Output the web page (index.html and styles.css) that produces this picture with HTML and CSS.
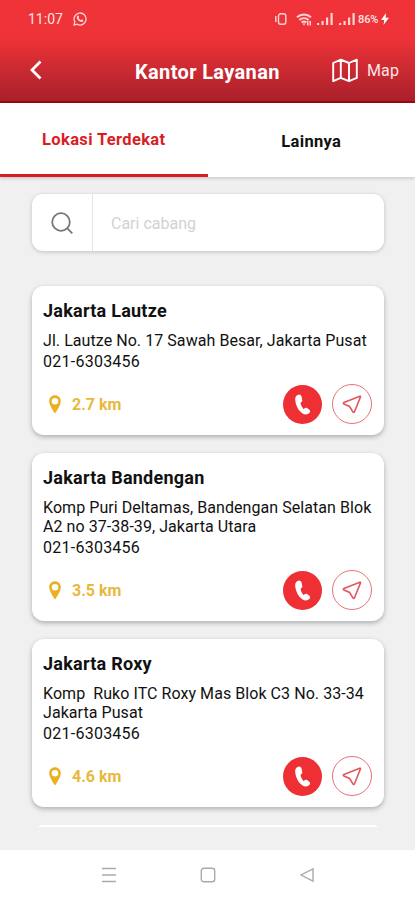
FILE: index.html
```html
<!DOCTYPE html>
<html lang="id">
<head>
  <meta charset="UTF-8">
  <meta name="viewport" content="width=device-width, initial-scale=1.0">
  <title>Kantor Layanan</title>
  <link rel="stylesheet" href="styles.css">
</head>
<body>
  <svg class="sprite">
    <symbol id="pin" viewBox="0 0 12 19">
      <path fill-rule="evenodd" d="M6 .3C2.800.3.2 2.900.2 6.200c0 4.300 5.800 12.300 5.800 12.300s5.800-8 5.800-12.300C11.800 2.900 9.200.3 6 .3zm0 2.700a3.300 3.300 0 1 1 0 6.600 3.300 3.300 0 0 1 0-6.600z"/>
    </symbol>
    <symbol id="phone" viewBox="0 0 18 22">
      <path d="M4.600.6C2.300 1 1 3 1.300 6.200c.5 5.600 3.300 11.300 7.800 14.300 2.700 1.800 5.900 1.300 7.500-1 .8-1.100.6-2.300-.4-3l-2.300-1.700c-1-.7-2-.5-2.700.2l-.9.9c-1.800-1.600-3-4-3.400-6.700l1-.8c.8-.6 1-1.400.8-2.400L8 2.600C7.600 1.100 6.200.3 4.600.6z"/>
    </symbol>
    <symbol id="send" viewBox="0 0 20 20">
      <path d="M17.800 2.200 1.900 8.500c-.9.400-.8 1.200 0 1.600l5.700 2.400 3.300 5.400c.5.900 1.300.8 1.600-.1l6-14.900c.2-.5-.2-.9-.7-.7z"/>
    </symbol>
    <symbol id="signal" viewBox="0 0 16 12">
      <path d="M0 10h2.200v2H0zM4.500 8h2.200v4H4.500zM9 4.500h2.200V12H9zM13.500 0h2.200v12h-2.200z"/>
    </symbol>
  </svg>
  <div class="page">
    <div class="header">
      <div class="status">
        <span class="time">11:07</span>
        <svg class="wa" viewBox="0 0 14 14"><path d="M1 13l.8-3.100A6 6 0 1 1 4.200 12.300z"/><path class="fill" d="M4.400 3.700c.7-.6 1.200-.2 1.700 1.200.1.400-.3.700-.5 1 .5 1 1.300 1.800 2.400 2.300.4-.4.700-.8 1.100-.6 1.200.5 1.500.8 1.200 1.500-.8 1.500-2.600 1.100-4.300 0C4.100 7.700 3 5.100 4.400 3.700z"/></svg>
        <div class="status-r">
          <svg class="vibrate" viewBox="0 0 12 12"><rect x="3.500" y=".8" width="7.300" height="10.400" rx="2.200"/><path d="M.8 3v6"/></svg>
          <svg class="wifi" viewBox="0 0 16 13"><path d="M1 4.300c4-3.700 10-3.700 14 0M3.300 7c2.700-2.500 6.700-2.500 9.400 0M5.700 9.500c1.400-1.200 3.200-1.200 4.600 0"/><path class="fill" d="M6.500 10.500h3L8 12.500zM11 8h1.500v4.500H11zM13.500 8H15v4.500h-1.500z"/></svg>
          <svg class="signal"><use href="#signal"/></svg>
          <svg class="signal second"><use href="#signal"/></svg>
          <span class="battery">86%</span>
          <svg class="bolt" viewBox="0 0 8 12"><path d="M5 0 0 7h3.200L2.500 12 8 4.800H4.700z"/></svg>
        </div>
      </div>
      <div class="navbar">
        <svg class="back" viewBox="0 0 12 20"><path d="M10.500 1.500 2 10l8.500 8.500"/></svg>
        <h1>Kantor Layanan</h1>
        <div class="map">
          <svg viewBox="0 0 26 24"><path d="M1.200 4.500 8.800 1.200l8.200 3.300 7.800-3.300v18.200L17 22.700l-8.200-3.300-7.600 3.300zM8.800 1.200v18.200M17 4.500v18.200"/></svg>
          <span>Map</span>
        </div>
      </div>
    </div>
    <ul class="tabs">
      <li class="active">Lokasi Terdekat</li>
      <li>Lainnya</li>
    </ul>
    <div class="content">
      <div class="search">
        <div class="search-icon">
          <svg viewBox="0 0 22 22"><circle cx="10" cy="10" r="8.800"/><path d="m16.300 16.300 5 5"/></svg>
        </div>
        <input type="text" placeholder="Cari cabang">
      </div>
      <div class="card">
        <h2>Jakarta Lautze</h2>
        <p class="address">Jl. Lautze No. 17 Sawah Besar, Jakarta Pusat</p>
        <p class="phone">021-6303456</p>
        <div class="card-foot">
          <svg class="pin"><use href="#pin"/></svg>
          <span class="distance">2.7 km</span>
          <a class="btn call"><svg><use href="#phone"/></svg></a>
          <a class="btn route"><svg><use href="#send"/></svg></a>
        </div>
      </div>
      <div class="card">
        <h2>Jakarta Bandengan</h2>
        <p class="address">Komp Puri Deltamas, Bandengan Selatan Blok<br>A2 no 37-38-39, Jakarta Utara</p>
        <p class="phone">021-6303456</p>
        <div class="card-foot">
          <svg class="pin"><use href="#pin"/></svg>
          <span class="distance">3.5 km</span>
          <a class="btn call"><svg><use href="#phone"/></svg></a>
          <a class="btn route"><svg><use href="#send"/></svg></a>
        </div>
      </div>
      <div class="card">
        <h2>Jakarta Roxy</h2>
        <p class="address">Komp&nbsp; Ruko ITC Roxy Mas Blok C3 No. 33-34<br>Jakarta Pusat</p>
        <p class="phone">021-6303456</p>
        <div class="card-foot">
          <svg class="pin"><use href="#pin"/></svg>
          <span class="distance">4.6 km</span>
          <a class="btn call"><svg><use href="#phone"/></svg></a>
          <a class="btn route"><svg><use href="#send"/></svg></a>
        </div>
      </div>
      <div class="card next"></div>
    </div>
    <div class="sysnav">
      <svg viewBox="0 0 16 16"><path d="M1 1.500h14M1 8h14M1 14.500h14"/></svg>
      <svg viewBox="0 0 16 16"><rect x="1.300" y="1.300" width="13.400" height="13.400" rx="2.500"/></svg>
      <svg viewBox="0 0 16 16"><path d="M14 1.800v12.400L2 8z"/></svg>
    </div>
  </div>
</body>
</html>
```
FILE: styles.css
```css
*{
  box-sizing: border-box;
}
html,body,h1,h2,p,ul,li,input{
  margin: 0;
  padding: 0;
}
li{
  list-style: none;
}
body{
  font-family: Roboto, "Liberation Sans", sans-serif;
  font-size: 16px;
  color: #111;
  background: #f0f0f0;
}
svg{
  display: block;
  flex: none;
}
.sprite{
  display: none;
}
.page{
  display: flex;
  flex-direction: column;
  height: 900px;
  overflow: hidden;
}
.header{
  flex: none;
  height: 103px;
  color: #fbe4e4;
  background: linear-gradient(#ef3338 0, #ee3338 38px, #a9202b 100%);
  border-bottom: 2px solid #9c0a0e;
}
.status{
  display: flex;
  align-items: center;
  height: 38px;
  padding: 0 26px 0 28px;
}
.time{
  width: 45px;
  font-size: 14px;
}
.wa{
  width: 14px;
  height: 14px;
  fill: none;
  stroke: #fbd5d5;
  stroke-width: 1.3;
}
.fill{
  fill: #fbd5d5;
  stroke: none;
}
.status-r{
  display: flex;
  align-items: center;
  margin-left: auto;
}
.vibrate,.wifi{
  width: 12px;
  height: 12px;
  fill: none;
  stroke: #fbd5d5;
  stroke-width: 1.4;
}
.wifi{
  width: 16px;
  height: 13px;
  margin: 0 5px 0 9px;
  stroke-width: 1.9;
}
.signal{
  width: 16px;
  height: 12px;
  fill: #fbd5d5;
}
.second{
  margin: 0 3px 0 6px;
}
.battery{
  width: 22px;
  font-size: 11px;
  font-weight: 500;
  letter-spacing: -.1px;
}
.bolt{
  width: 8px;
  height: 12px;
  margin-left: 1px;
  fill: #fff;
}
.navbar{
  display: flex;
  align-items: center;
  height: 64px;
  padding: 0 16px 0 30px;
}
.back{
  width: 12px;
  height: 20px;
  fill: none;
  stroke: #fff;
  stroke-width: 2.8;
}
.navbar h1{
  margin-left: 93px;
  padding-top: 3px;
  font-size: 20px;
  line-height: 24px;
  font-weight: 700;
  letter-spacing: .35px;
  color: #fff;
  white-space: nowrap;
}
.map{
  display: flex;
  align-items: center;
  margin-left: auto;
}
.map svg{
  width: 26px;
  height: 25px;
  margin-right: 9px;
  fill: none;
  stroke: #fff;
  stroke-width: 1.9;
  stroke-linejoin: round;
}
.map span{
  font-size: 16px;
  letter-spacing: .1px;
}
.tabs{
  display: flex;
  flex: none;
  position: relative;
  height: 74px;
  background: #fff;
  box-shadow: 0 1px 4px rgba(0,0,0,.2);
}
.tabs li{
  flex: 1;
  padding-top: 3px;
  line-height: 71px;
  font-size: 16.500px;
  letter-spacing: .35px;
  font-weight: 700;
  text-align: center;
}
.tabs .active{
  padding-top: 1px;
  color: #d81e25;
  border-bottom: 3px solid #d81e25;
}
.content{
  flex: none;
  height: 650px;
  padding: 17px 31px 0 32px;
  overflow: hidden;
}
.search{
  display: flex;
  height: 57px;
  margin-bottom: 35px;
  background: #fff;
  border-radius: 11px;
  box-shadow: 0 1px 4px rgba(0,0,0,.2);
}
.search-icon{
  display: flex;
  align-items: center;
  justify-content: center;
  width: 61px;
  border-right: 1px solid #e4e4e4;
}
.search-icon svg{
  width: 22px;
  height: 22px;
  fill: none;
  stroke: #777;
  stroke-width: 1.8;
}
.search input{
  flex: 1;
  min-width: 0;
  padding: 1px 0 0 18px;
  border: 0;
  background: none;
  font-family: inherit;
  font-size: 16px;
}
.search input::placeholder{
  color: #d2d2d2;
}
.card{
  margin-bottom: 18px;
  padding: 14px 12px 11px 11px;
  background: #fff;
  border-radius: 12px;
  box-shadow: 0 2px 5px rgba(0,0,0,.28);
}
.card h2{
  margin-bottom: 9px;
  font-size: 18px;
  line-height: 22px;
  font-weight: 700;
  letter-spacing: .25px;
}
.card p{
  line-height: 19px;
  letter-spacing: .06px;
  white-space: nowrap;
}
.card .phone{
  margin-top: 2px;
  letter-spacing: .25px;
}
.card-foot{
  display: flex;
  align-items: center;
  height: 40px;
  margin-top: 13px;
  padding-left: 6px;
}
.pin{
  width: 12px;
  height: 19px;
  margin-right: 11px;
  fill: #eab01e;
}
.distance{
  margin-right: auto;
  font-weight: 700;
  color: #e8b83c;
}
.btn{
  display: flex;
  align-items: center;
  justify-content: center;
  width: 40px;
  height: 40px;
  border-radius: 50%;
}
.call{
  width: 39px;
  height: 39px;
  margin-right: 10px;
  background: #ee2f34;
}
.call svg{
  width: 17px;
  height: 21px;
  fill: #fff;
}
.route{
  border: 1.5px solid #e57379;
}
.route svg{
  width: 20px;
  height: 20px;
  fill: none;
  stroke: #e2575e;
  stroke-width: 1.6;
}
.next{
  height: 60px;
  box-shadow: none;
}
.sysnav{
  display: flex;
  justify-content: center;
  align-items: center;
  gap: 83px;
  height: 50px;
  margin-top: auto;
  background: #fff;
}
.sysnav svg{
  width: 16px;
  height: 16px;
  fill: none;
  stroke: #aaa;
  stroke-width: 1.4;
}
```
